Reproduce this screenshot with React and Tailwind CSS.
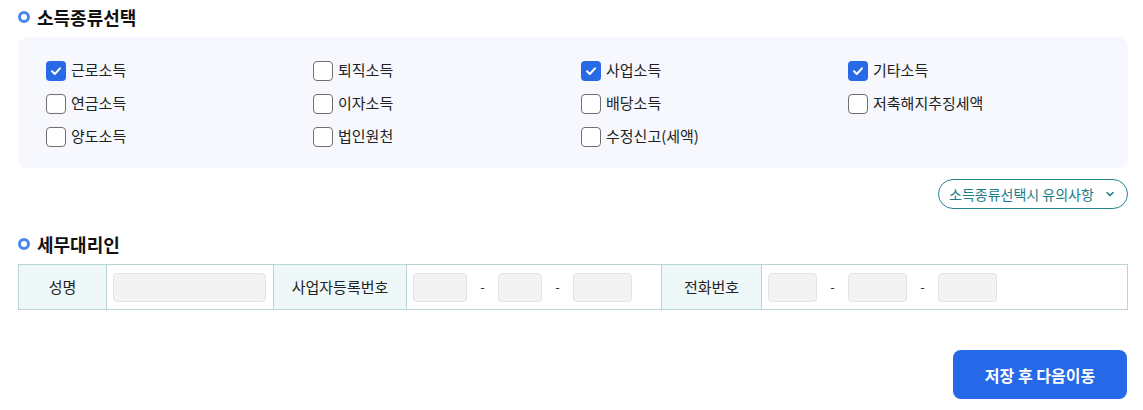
import React from "react";

const font = { fontFamily: '"Noto Sans CJK KR", "Noto Sans", sans-serif' };

function Check({ checked, label }) {
  return (
    <label className="flex items-center h-[33px] gap-[5px] text-[15px] text-[#222]">
      {checked ? (
        <span className="w-[20px] h-[20px] rounded-[4px] bg-[#2869e6] flex items-center justify-center">
          <svg width="12" height="12" viewBox="0 0 12 12" fill="none">
            <path d="M2 6.3 L4.8 9 L10 3.3" stroke="white" strokeWidth="2" strokeLinecap="round" strokeLinejoin="round" />
          </svg>
        </span>
      ) : (
        <span className="w-[20px] h-[20px] rounded-[4px] bg-white border border-[#6f6f6f]" />
      )}
      <span>{label}</span>
    </label>
  );
}

function Heading({ children }) {
  return (
    <div className="flex items-center h-[34px]">
      <span className="w-[12px] h-[12px] rounded-full border-[3px] border-[#4a85ea]" />
      <span className="ml-[7px] text-[18px] font-bold text-[#111]">{children}</span>
    </div>
  );
}

function Inp({ w }) {
  return <div className={`h-[29px] rounded-[4px] bg-[#f3f3f3] border border-[#e3e3e3] ${w}`} />;
}

function Dash() {
  return <span className="w-[31px] text-center text-[13px] text-[#333]">-</span>;
}

export default function App() {
  const rows = [
    [["근로소득", true], ["퇴직소득", false], ["사업소득", true], ["기타소득", true]],
    [["연금소득", false], ["이자소득", false], ["배당소득", false], ["저축해지추징세액", false]],
    [["양도소득", false], ["법인원천", false], ["수정신고(세액)", false], null],
  ];
  return (
    <div style={font} className="w-[1143px] h-[410px] bg-white pl-[18px] box-border">
      <div className="w-[1110px]">
        <Heading>소득종류선택</Heading>
        <div className="mt-[3px] w-[1110px] h-[131px] rounded-[10px] bg-[#f6f8fd] pt-[17px] pl-[28px]">
          {rows.map((r, i) => (
            <div key={i} className="grid grid-cols-[267px_268px_267px_1fr]">
              {r.map((c, j) => (c ? <Check key={j} label={c[0]} checked={c[1]} /> : <div key={j} />))}
            </div>
          ))}
        </div>
        <div className="flex justify-end mt-[11px]">
          <button className="h-[30px] w-[190px] rounded-full border border-[#23848f] text-[#1c7b86] text-[14px] flex items-center justify-between pl-[10px] pr-[12px]">
            <span>소득종류선택시 유의사항</span>
            <svg width="10" height="10" viewBox="0 0 10 10" fill="none">
              <path d="M2 3.5 L5 6.5 L8 3.5" stroke="#1c7b86" strokeWidth="1.5" strokeLinecap="round" strokeLinejoin="round" />
            </svg>
          </button>
        </div>
        <div className="mt-[18px]">
          <Heading>세무대리인</Heading>
        </div>
        <div className="mt-[3px] w-[1110px] h-[46px] border border-[#b9d5d8] flex text-[15px] text-[#222]">
          <div className="w-[88px] bg-[#eef8f8] border-r border-[#b9d5d8] flex items-center justify-center">성명</div>
          <div className="w-[167px] border-r border-[#b9d5d8] flex items-center px-[6px]">
            <Inp w="w-[153px]" />
          </div>
          <div className="w-[133px] bg-[#eef8f8] border-r border-[#b9d5d8] flex items-center justify-center">사업자등록번호</div>
          <div className="w-[255px] border-r border-[#b9d5d8] flex items-center pl-[6px]">
            <Inp w="w-[54px]" />
            <Dash />
            <Inp w="w-[44px]" />
            <Dash />
            <Inp w="w-[59px]" />
          </div>
          <div className="w-[100px] bg-[#eef8f8] border-r border-[#b9d5d8] flex items-center justify-center">전화번호</div>
          <div className="flex-1 flex items-center pl-[6px]">
            <Inp w="w-[49px]" />
            <Dash />
            <Inp w="w-[59px]" />
            <Dash />
            <Inp w="w-[59px]" />
          </div>
        </div>
        <div className="flex justify-end mt-[40px] pr-[1px]">
          <button className="w-[174px] h-[49px] rounded-[8px] bg-[#2569e8] text-white text-[16px] font-bold">
            저장 후 다음이동
          </button>
        </div>
      </div>
    </div>
  );
}
